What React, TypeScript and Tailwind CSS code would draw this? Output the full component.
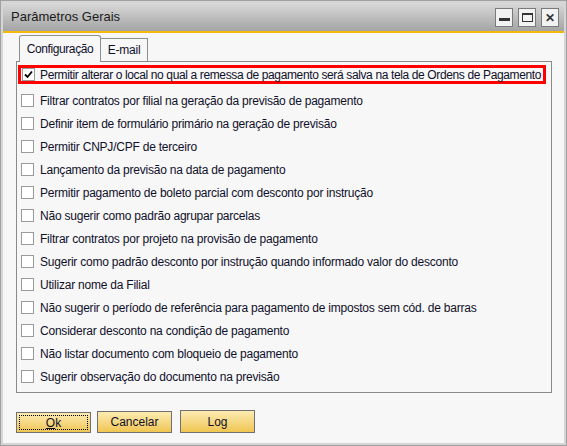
import React from "react";

const items = [
  "Filtrar contratos por filial na geração da previsão de pagamento",
  "Definir item de formulário primário na geração de previsão",
  "Permitir CNPJ/CPF de terceiro",
  "Lançamento da previsão na data de pagamento",
  "Permitir pagamento de boleto parcial com desconto por instrução",
  "Não sugerir como padrão agrupar parcelas",
  "Filtrar contratos por projeto na provisão de pagamento",
  "Sugerir como padrão desconto por instrução quando informado valor do desconto",
  "Utilizar nome da Filial",
  "Não sugerir o período de referência para pagamento de impostos sem cód. de barras",
  "Considerar desconto na condição de pagamento",
  "Não listar documento com bloqueio de pagamento",
  "Sugerir observação do documento na previsão",
];

function Box({ checked }: { checked?: boolean }) {
  return (
    <div className="w-[13px] h-[13px] shrink-0 border border-[#9a9a9a] bg-white flex items-center justify-center">
      {checked && (
        <svg width="9" height="9" viewBox="0 0 9 9">
          <path d="M1 4.5 L3.5 7 L8 1.5" stroke="#000" strokeWidth="1.8" fill="none" />
        </svg>
      )}
    </div>
  );
}

function WinBtn({ children }: { children: React.ReactNode }) {
  return (
    <div className="w-[18px] h-[19px] border border-[#7a7a7a] bg-[#f2f2f2] flex items-center justify-center">
      {children}
    </div>
  );
}

export default function App() {
  return (
    <div
      className="w-[567px] h-[446px] border border-[#a0a0a0] bg-[#d6d6d6] p-[2px] flex flex-col text-[#10102a]"
      style={{ fontFamily: '"Liberation Sans", Arial, sans-serif' }}
    >
      <div className="h-[28px] shrink-0 bg-gradient-to-b from-[#d9d9d9] to-[#a4a4a4] flex items-center pl-[8px] pr-[5px]">
        <span className="text-[13px] text-[#1a1a1a] flex-1">Parâmetros Gerais</span>
        <div className="flex gap-[5px] mt-[1px]">
          <WinBtn>
            <div className="w-[11px] h-[3px] bg-[#333] mt-[4px]" />
          </WinBtn>
          <WinBtn>
            <div className="w-[11px] h-[9px] border border-[#333] border-t-[2px]" />
          </WinBtn>
          <WinBtn>
            <span className="text-[12px] font-bold text-[#333] leading-none">✕</span>
          </WinBtn>
        </div>
      </div>
      <div className="h-[2px] shrink-0 bg-[#f5b90a]" />
      <div className="flex-1 bg-[#f7f7f7] flex flex-col pl-[13px] pr-[12px] pt-[2px] text-[12px] tracking-[-0.22px]">
        <div className="flex items-end h-[26px] pl-[3px]">
          <div className="h-[27px] w-[82px] border border-b-0 border-[#8f8f8f] rounded-t-[3px] bg-[#f7f7f7] flex items-center justify-center relative z-10 -mb-px pb-[1px] tracking-[-0.4px]">
            Configuração
          </div>
          <div className="h-[23px] w-[47px] border border-b-0 border-l-0 border-[#8f8f8f] bg-[#f7f7f7] flex items-center justify-center">
            E-mail
          </div>
        </div>
        <div className="h-[332px] border border-[#8a8a8a] pt-[3px] pl-[1px] pr-[5px]">
          <div className="h-[19px] border-[3px] border-[#ff0000] flex items-center pl-[1px] gap-[5px] whitespace-nowrap">
            <Box checked />
            <span className="tracking-[-0.37px]">
              Permitir alterar o local no qual a remessa de pagamento será salva na tela de Ordens de Pagamento
            </span>
          </div>
          <div className="mt-[5px] flex flex-col">
            {items.map((t) => (
              <div key={t} className="h-[23px] flex items-center pl-[3px] gap-[6px] whitespace-nowrap">
                <Box />
                <span>{t}</span>
              </div>
            ))}
          </div>
        </div>
        <div className="flex items-end gap-[6px] mt-[17px] tracking-normal">
          <button className="w-[75px] h-[21px] border border-[#707070] bg-gradient-to-b from-[#fcebb0] to-[#f0c650] p-[2px]">
            <div className="w-full h-full border border-dotted border-black flex items-center justify-center">
              <span><span className="underline">O</span>k</span>
            </div>
          </button>
          <button className="w-[75px] h-[22px] border border-[#707070] bg-gradient-to-b from-[#fcebb0] to-[#f0c650] flex items-center justify-center">
            Cancelar
          </button>
          <button className="w-[75px] h-[23px] border border-[#707070] bg-gradient-to-b from-[#fcebb0] to-[#f0c650] flex items-center justify-center ml-[2px]">
            Log
          </button>
        </div>
      </div>
    </div>
  );
}
